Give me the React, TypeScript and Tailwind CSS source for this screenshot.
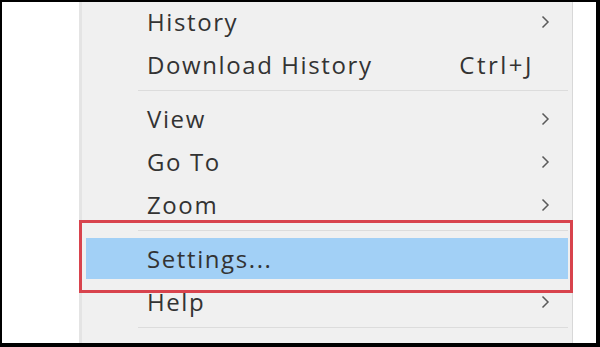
import React from "react";

const Chevron = () => (
  <svg width="9" height="14" viewBox="0 0 9 14" className="absolute right-[22px] top-1/2 -translate-y-1/2">
    <path d="M1.5 1.5 L7 7 L1.5 12.5" fill="none" stroke="#5a5a5a" strokeWidth="1.5" />
  </svg>
);

type ItemProps = { label: string; sub?: boolean; shortcut?: string; active?: boolean };

const Item = ({ label, sub, shortcut, active }: ItemProps) => (
  <div className="relative h-[43px] flex items-center">
    {active && <div className="absolute left-[4px] right-[4px] top-[1px] bottom-[1px] bg-[#a2d0f6]" />}
    <span className="relative pl-[65px] text-[#333333]">{label}</span>
    {shortcut && <span className="absolute right-[38px] tracking-[2.5px] text-[#333333]">{shortcut}</span>}
    {sub && <Chevron />}
  </div>
);

const Sep = () => (
  <div className="h-[11px] pt-[4px] pl-[56px] pr-[4px]">
    <div className="h-px bg-[#dcdcdc]" />
  </div>
);

export default function App() {
  return (
    <div
      className="w-[600px] h-[347px] bg-black pt-[2px] pl-[2px] pr-[4px] pb-[4px]"
      style={{ fontFamily: '"Open Sans", "Noto Sans", sans-serif' }}
    >
      <div className="flex h-full bg-white overflow-hidden">
        <div className="w-[77px] shrink-0" />
        <div className="relative w-[494px] shrink-0 bg-[#f0f0f0] border-l-[3px] border-l-[#e4e4e4] border-r border-r-[#d8d8d8] text-[24px] leading-none tracking-[1.6px]">
          <div className="-mt-[2px]">
            <Item label="History" sub />
            <Item label="Download History" shortcut="Ctrl+J" />
            <Sep />
            <Item label="View" sub />
            <Item label="Go To" sub />
            <Item label="Zoom" sub />
            <Sep />
            <Item label="Settings..." active />
            <Item label="Help" sub />
            <Sep />
          </div>
          <div className="absolute left-[-3px] right-[-1px] top-[218px] h-[73px] border-[3px] border-[#d8434d]" />
        </div>
        <div className="flex-1" />
      </div>
    </div>
  );
}
